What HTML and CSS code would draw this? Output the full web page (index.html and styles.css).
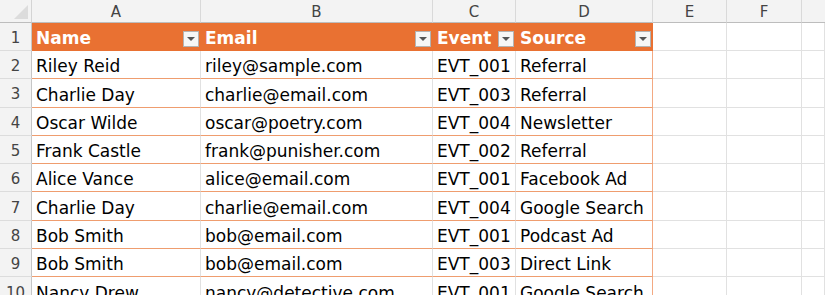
FILE: index.html
```html
<!DOCTYPE html>
<html>
<head>
<meta charset="utf-8">
<link rel="stylesheet" href="styles.css">
</head>
<body>
<div class="sheet">
  <div class="corner"><span class="tri"></span></div>
  <div class="ch">A</div><div class="ch">B</div><div class="ch">C</div><div class="ch">D</div><div class="ch">E</div><div class="ch">F</div><div class="ch last"></div>

  <div class="rh">1</div>
  <div class="th"><span>Name</span><span class="dd"></span></div>
  <div class="th"><span>Email</span><span class="dd"></span></div>
  <div class="th"><span>Event</span><span class="dd"></span></div>
  <div class="th end"><span>Source</span><span class="dd"></span></div>
  <div class="e"></div><div class="e"></div><div class="e"></div>

  <div class="rh">2</div>
  <div class="td">Riley Reid</div><div class="td">riley@sample.com</div><div class="td">EVT_001</div><div class="td end">Referral</div>
  <div class="e"></div><div class="e"></div><div class="e"></div>

  <div class="rh">3</div>
  <div class="td">Charlie Day</div><div class="td">charlie@email.com</div><div class="td">EVT_003</div><div class="td end">Referral</div>
  <div class="e"></div><div class="e"></div><div class="e"></div>

  <div class="rh">4</div>
  <div class="td">Oscar Wilde</div><div class="td">oscar@poetry.com</div><div class="td">EVT_004</div><div class="td end">Newsletter</div>
  <div class="e"></div><div class="e"></div><div class="e"></div>

  <div class="rh">5</div>
  <div class="td">Frank Castle</div><div class="td">frank@punisher.com</div><div class="td">EVT_002</div><div class="td end">Referral</div>
  <div class="e"></div><div class="e"></div><div class="e"></div>

  <div class="rh">6</div>
  <div class="td">Alice Vance</div><div class="td">alice@email.com</div><div class="td">EVT_001</div><div class="td end">Facebook Ad</div>
  <div class="e"></div><div class="e"></div><div class="e"></div>

  <div class="rh">7</div>
  <div class="td">Charlie Day</div><div class="td">charlie@email.com</div><div class="td">EVT_004</div><div class="td end">Google Search</div>
  <div class="e"></div><div class="e"></div><div class="e"></div>

  <div class="rh">8</div>
  <div class="td">Bob Smith</div><div class="td">bob@email.com</div><div class="td">EVT_001</div><div class="td end">Podcast Ad</div>
  <div class="e"></div><div class="e"></div><div class="e"></div>

  <div class="rh">9</div>
  <div class="td">Bob Smith</div><div class="td">bob@email.com</div><div class="td">EVT_003</div><div class="td end">Direct Link</div>
  <div class="e"></div><div class="e"></div><div class="e"></div>

  <div class="rh">10</div>
  <div class="td">Nancy Drew</div><div class="td">nancy@detective.com</div><div class="td">EVT_001</div><div class="td end">Google Search</div>
  <div class="e"></div><div class="e"></div><div class="e"></div>
</div>
</body>
</html>
```
FILE: styles.css
```css
html, body {
  margin: 0;
  padding: 0;
  background: #ffffff;
  overflow: hidden;
}
.sheet {
  display: grid;
  grid-template-columns: 32px 169px 232px 83px 137px 74px 75px 1fr;
  grid-template-rows: 23px 28px repeat(9, 28.3px);
  width: 825px;
  font-family: "DejaVu Sans", sans-serif;
  font-size: 17px;
  color: #000;
}
.sheet > div {
  box-sizing: border-box;
  overflow: hidden;
  white-space: nowrap;
}
.corner {
  background: #f3f3f3;
  border-right: 1px solid #d4d4d4;
  border-bottom: 1px solid #bdbdbd;
  display: flex;
  align-items: flex-end;
  justify-content: flex-end;
  padding: 0 3px 3px 0;
}
.tri {
  width: 0;
  height: 0;
  border-left: 14px solid transparent;
  border-bottom: 14px solid #dcdcdc;
}
.ch {
  background: #f3f3f3;
  border-right: 1px solid #d9d9d9;
  border-bottom: 1px solid #bdbdbd;
  display: flex;
  align-items: center;
  justify-content: center;
  font-size: 15px;
  color: #444;
  padding-top: 1px;
}
.ch.last { border-right: none; }
.rh {
  background: #f3f3f3;
  border-right: 1px solid #c6c6c6;
  border-bottom: 1px solid #dcdcdc;
  display: flex;
  align-items: center;
  justify-content: center;
  font-size: 15px;
  color: #444;
  padding-top: 3px;
}
.th {
  background: #e97132;
  color: #fff;
  font-weight: bold;
  display: flex;
  align-items: flex-end;
  justify-content: space-between;
  padding: 0 2px 3px 4px;
  line-height: 20px;
}
.dd {
  box-sizing: border-box;
  width: 16px;
  height: 16px;
  margin-bottom: 1px;
  background: #f6f6f6;
  border: 1px solid #b3b3b3;
  display: flex;
  align-items: center;
  justify-content: center;
}
.dd::after {
  content: "";
  width: 0;
  height: 0;
  border-left: 4px solid transparent;
  border-right: 4px solid transparent;
  border-top: 4px solid #555;
}
.td {
  border-right: 1px solid #e1e1e1;
  border-bottom: 1px solid #ef9d6f;
  display: flex;
  align-items: flex-end;
  padding: 0 0 2px 4px;
  line-height: 20px;
}
.td.end { border-right: 1px solid #f3a982; }
.e {
  border-right: 1px solid #e1e1e1;
  border-bottom: 1px solid #e1e1e1;
}
```
